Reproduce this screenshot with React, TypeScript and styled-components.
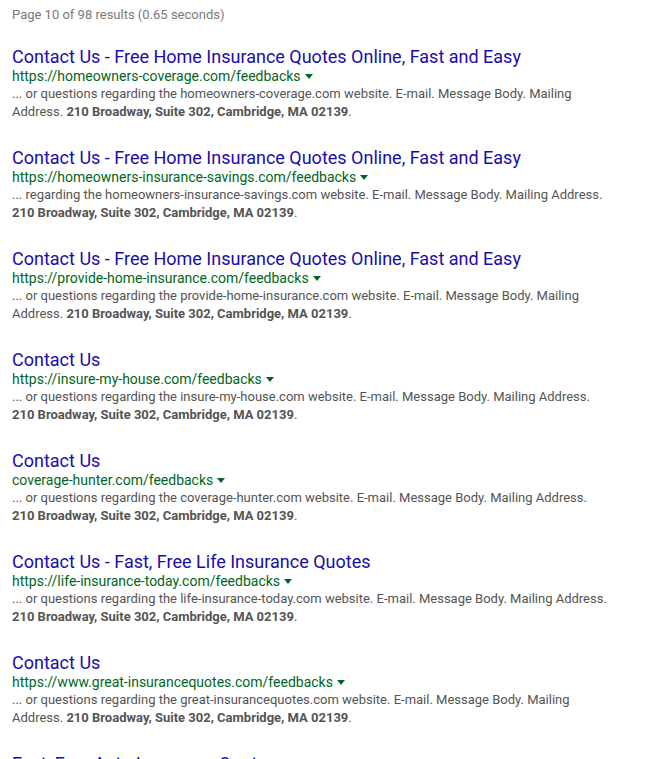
import React from "react";
import styled, { createGlobalStyle } from "styled-components";

const Global = createGlobalStyle`
  html, body { margin: 0; padding: 0; background: #fff; }
  body { font-family: Roboto, "Liberation Sans", Arial, sans-serif; }
`;

const Page = styled.div`
  padding: 6px 12px 0 12px;
  height: 759px;
  box-sizing: border-box;
  overflow: hidden;
`;

const Stats = styled.div`
  font-size: 13px;
  line-height: 18px;
  color: #7a7a7a;
  margin-bottom: 23px;
`;

const Results = styled.div`
  display: flex;
  flex-direction: column;
  gap: 27px;
`;

const Result = styled.div`
  display: flex;
  flex-direction: column;
`;

const Title = styled.a`
  font-size: 18px;
  line-height: 20px;
  color: #1a0dab;
  text-decoration: none;
  white-space: nowrap;
`;

const UrlRow = styled.div`
  display: flex;
  align-items: center;
  font-size: 14px;
  line-height: 18px;
  color: #006621;
  white-space: nowrap;
`;

const Caret = styled.span`
  display: inline-block;
  width: 0;
  height: 0;
  margin-left: 4px;
  margin-top: 1px;
  border-left: 4px solid transparent;
  border-right: 4px solid transparent;
  border-top: 5px solid #006621;
`;

const Snippet = styled.div`
  font-size: 13px;
  line-height: 18px;
  color: #545454;
`;

const Line = styled.div`
  white-space: nowrap;
  b { color: #545454; font-weight: 700; }
`;

type R = { title: string; url: string; l1: string; l2pre: string };

const ADDR = "210 Broadway, Suite 302, Cambridge, MA 02139";

const data: R[] = [
  {
    title: "Contact Us - Free Home Insurance Quotes Online, Fast and Easy",
    url: "https://homeowners-coverage.com/feedbacks",
    l1: "... or questions regarding the homeowners-coverage.com website. E-mail. Message Body. Mailing",
    l2pre: "Address. ",
  },
  {
    title: "Contact Us - Free Home Insurance Quotes Online, Fast and Easy",
    url: "https://homeowners-insurance-savings.com/feedbacks",
    l1: "... regarding the homeowners-insurance-savings.com website. E-mail. Message Body. Mailing Address.",
    l2pre: "",
  },
  {
    title: "Contact Us - Free Home Insurance Quotes Online, Fast and Easy",
    url: "https://provide-home-insurance.com/feedbacks",
    l1: "... or questions regarding the provide-home-insurance.com website. E-mail. Message Body. Mailing",
    l2pre: "Address. ",
  },
  {
    title: "Contact Us",
    url: "https://insure-my-house.com/feedbacks",
    l1: "... or questions regarding the insure-my-house.com website. E-mail. Message Body. Mailing Address.",
    l2pre: "",
  },
  {
    title: "Contact Us",
    url: "coverage-hunter.com/feedbacks",
    l1: "... or questions regarding the coverage-hunter.com website. E-mail. Message Body. Mailing Address.",
    l2pre: "",
  },
  {
    title: "Contact Us - Fast, Free Life Insurance Quotes",
    url: "https://life-insurance-today.com/feedbacks",
    l1: "... or questions regarding the life-insurance-today.com website. E-mail. Message Body. Mailing Address.",
    l2pre: "",
  },
  {
    title: "Contact Us",
    url: "https://www.great-insurancequotes.com/feedbacks",
    l1: "... or questions regarding the great-insurancequotes.com website. E-mail. Message Body. Mailing",
    l2pre: "Address. ",
  },
];

export default function App() {
  return (
    <>
      <Global />
      <Page>
        <Stats>Page 10 of 98 results (0.65 seconds)</Stats>
        <Results>
          {data.map((r, i) => (
            <Result key={i}>
              <Title href="#">{r.title}</Title>
              <UrlRow>
                {r.url}
                <Caret />
              </UrlRow>
              <Snippet>
                <Line>{r.l1}</Line>
                <Line>
                  {r.l2pre}
                  <b>{ADDR}</b>.
                </Line>
              </Snippet>
            </Result>
          ))}
          <Result>
            <Title href="#">Fast, Free Auto Insurance Quotes</Title>
          </Result>
        </Results>
      </Page>
    </>
  );
}
